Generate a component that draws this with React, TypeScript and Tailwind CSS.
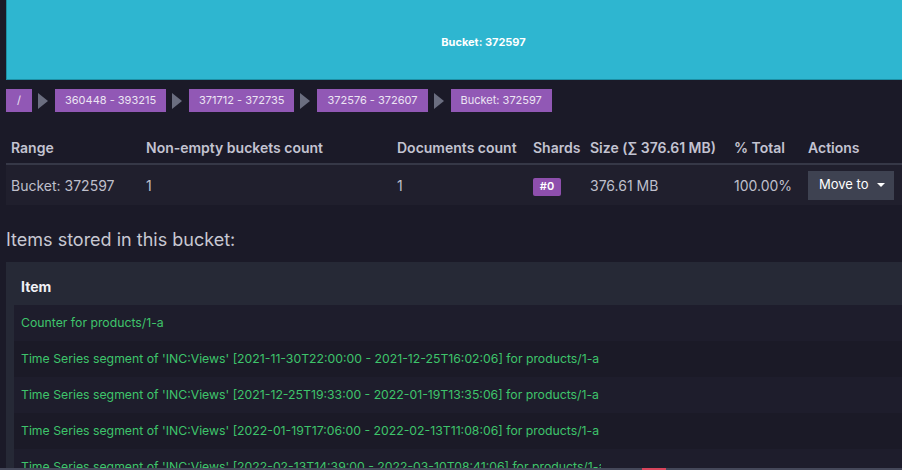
import React from "react";

const crumbs = ["/", "360448 - 393215", "371712 - 372735", "372576 - 372607", "Bucket: 372597"];

const items = [
  "Counter for products/1-a",
  "Time Series segment of 'INC:Views' [2021-11-30T22:00:00 - 2021-12-25T16:02:06] for products/1-a",
  "Time Series segment of 'INC:Views' [2021-12-25T19:33:00 - 2022-01-19T13:35:06] for products/1-a",
  "Time Series segment of 'INC:Views' [2022-01-19T17:06:00 - 2022-02-13T11:08:06] for products/1-a",
  "Time Series segment of 'INC:Views' [2022-02-13T14:39:00 - 2022-03-10T08:41:06] for products/1-a",
];

function Arrow() {
  return (
    <svg width="10" height="16" viewBox="0 0 10 16" className="shrink-0">
      <polygon points="0,0 10,8 0,16" fill="#6b6e80" />
    </svg>
  );
}

export default function App() {
  return (
    <div
      className="relative w-[902px] h-[470px] overflow-hidden bg-[#1b1a28] flex flex-col"
      style={{ fontFamily: "Inter, 'Noto Sans', sans-serif" }}
    >
      <div className="ml-[6px] h-[80px] shrink-0 bg-[#2eb6d0] border-l border-b border-[#1d8fa4] flex items-center justify-center pl-[58px] pt-[6px]">
        <span className="text-[11px] font-bold text-white">Bucket: 372597</span>
      </div>

      <div className="ml-[6px] mt-[9px] flex items-center gap-[6px]">
        {crumbs.map((c, i) => (
          <React.Fragment key={i}>
            {i > 0 && <Arrow />}
            <div
              className={`h-[23px] flex items-center bg-[#9158b5] text-[11px] text-[#ece4f3] ${
                i === 0 ? "px-[11px]" : "px-[10px] ml-[1px]"
              }`}
            >
              {c}
            </div>
          </React.Fragment>
        ))}
      </div>

      <div className="ml-[6px] mt-[18px] text-[14px]">
        <div className="flex h-[35px] items-center pt-[1px] border-b-2 border-[#363847] font-semibold text-[#c3c3d1]">
          <div className="w-[135px] pl-[5px]">Range</div>
          <div className="w-[251px] pl-[5px]">Non-empty buckets count</div>
          <div className="w-[136px] pl-[5px]">Documents count</div>
          <div className="w-[57px] pl-[5px]">Shards</div>
          <div className="w-[144px] pl-[5px]">Size (∑ 376.61 MB)</div>
          <div className="w-[74px] pl-[5px]">% Total</div>
          <div className="w-[99px] pl-[5px]">Actions</div>
        </div>
        <div className="flex h-[40px] items-center bg-[#201f2d] text-[#bfbfcb]">
          <div className="w-[135px] pl-[5px]">Bucket: 372597</div>
          <div className="w-[251px] pl-[5px]">1</div>
          <div className="w-[136px] pl-[5px]">1</div>
          <div className="w-[57px] pl-[5px]">
            <span className="inline-flex h-[18px] w-[28px] items-center justify-center rounded-[2px] bg-[#8e4fad] text-[11px] font-semibold text-white">
              #0
            </span>
          </div>
          <div className="w-[144px] pl-[5px]">376.61 MB</div>
          <div className="w-[74px] pl-[5px]">100.00%</div>
          <div className="w-[99px] pl-[5px]">
            <div className="flex h-[29px] w-[86px] items-center bg-[#3e4251] pl-[11px] text-[13px] text-white">
              Move to
              <svg width="8" height="4" viewBox="0 0 8 4" className="ml-[8px]">
                <polygon points="0,0 8,0 4,4" fill="#ffffff" />
              </svg>
            </div>
          </div>
        </div>
      </div>

      <div className="ml-[6px] mt-[22px] h-[24px] flex items-center text-[18px] text-[#c8c8d2]">
        Items stored in this bucket:
      </div>

      <div className="ml-[6px] mt-[11px] flex-1 bg-[#262936] flex flex-col">
        <div className="h-[43px] shrink-0 flex items-center pl-[15px] pt-[6px] text-[14px] font-bold text-[#f0f0f5]">
          Item
        </div>
        <div className="ml-[8px] flex-1 flex flex-col">
          {items.map((t, i) => (
            <div
              key={i}
              className={`h-[36px] shrink-0 flex items-center pl-[7px] ${
                i % 2 === 0 ? "bg-[#1e1d2c]" : "bg-[#1b1a27]"
              }`}
            >
              <div className="w-[580px] overflow-hidden whitespace-nowrap text-[12.25px] text-[#3ec46b]">
                {t}
              </div>
            </div>
          ))}
        </div>
      </div>

      <div className="absolute bottom-0 left-0 right-0 h-[2px] bg-[#45485a]">
        <div className="ml-[642px] h-full w-[24px] bg-[#d9455c]" />
      </div>
    </div>
  );
}
